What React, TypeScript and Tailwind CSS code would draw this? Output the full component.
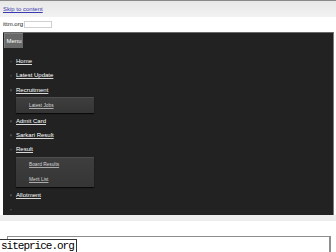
import React from 'react';

type Item = { label: string; sub?: string[] };

const items: Item[] = [
  { label: 'Home' },
  { label: 'Latest Update' },
  { label: 'Recruitment', sub: ['Latest Jobs'] },
  { label: 'Admit Card' },
  { label: 'Sarkari Result' },
  { label: 'Result', sub: ['Board Results', 'Merit List'] },
  { label: 'Allotment' },
  { label: '' },
];

const Bullet = () => <span className="absolute left-[7px] top-1/2 -translate-y-1/2 w-[2px] h-[1.5px] bg-[#4a4a4a]" />;

export default function App() {
  return (
    <div className="w-[336px] h-[252px] overflow-hidden bg-white relative font-['Liberation_Sans',Arial,sans-serif]">
      {/* top strip */}
      <div className="h-px bg-[#8a8a8a]" />
      <div className="h-[16px] bg-gradient-to-b from-[#e8e8e8] to-[#f2f2f2] pl-[3px] pt-[4px] text-[6px] leading-[8px]">
        <a href="#" className="text-[#3a3ab0] underline">Skip to content</a>
      </div>

      {/* site title + search */}
      <div className="h-[15px] flex items-center pl-[3px] text-[6px] text-[#222] bg-white">
        <span>ittm.org</span>
        <div className="ml-px w-[28px] h-[6.5px] border border-[#d0d0d0] bg-white" />
      </div>

      {/* dark nav panel */}
      <div className="ml-[3px] w-[331px] h-[183px] bg-[#222222] border-t border-[#6a6a6a] border-r border-r-[#7a7a7a]">
        <div className="ml-px w-[19px] h-[15px] bg-[#686868] border-t border-l border-[#7d7d7d] flex items-center justify-center text-[6px] text-white">
          Menu
        </div>
        <ul className="mt-[6.6px]">
          {items.map((it, i) => (
            <li key={i}>
              <div className="relative h-[14.2px] flex items-center pl-[13px]">
                <Bullet />
                {it.label && (
                  <a href="#" className="text-[6px] text-white underline decoration-[#d8d8d8]">
                    {it.label}
                  </a>
                )}
              </div>
              {it.sub && (
                <ul className="ml-[13px] w-[78px] mb-[1.5px] bg-gradient-to-b from-[#3e3e3e] to-[#353535] border-t border-[#4e4e4e] shadow-[0_1px_1px_rgba(0,0,0,0.7)]">
                  {it.sub.map((s) => (
                    <li key={s} className="h-[14.5px] flex items-center pl-[13px]">
                      <a href="#" className="text-[4.8px] text-[#d6d6d6] underline decoration-[#aaa]">
                        {s}
                      </a>
                    </li>
                  ))}
                </ul>
              )}
            </li>
          ))}
        </ul>
      </div>

      {/* below panel */}
      <div className="h-[6px] bg-[#ededed]" />
      <div className="h-[15px]" />
      <div className="ml-[6.5px] w-[324px] h-[30px] border-t border-l border-r-2 border-[#8e8e8e]" />

      {/* watermark */}
      <div className="absolute left-0 bottom-0 w-[77px] h-[13px] bg-white border-t border-r border-[#333] flex items-end pl-px overflow-hidden">
        <span className="font-['Liberation_Mono',monospace] text-[11px] leading-[12px] tracking-[-1px] text-black">siteprice.org</span>
      </div>
    </div>
  );
}
